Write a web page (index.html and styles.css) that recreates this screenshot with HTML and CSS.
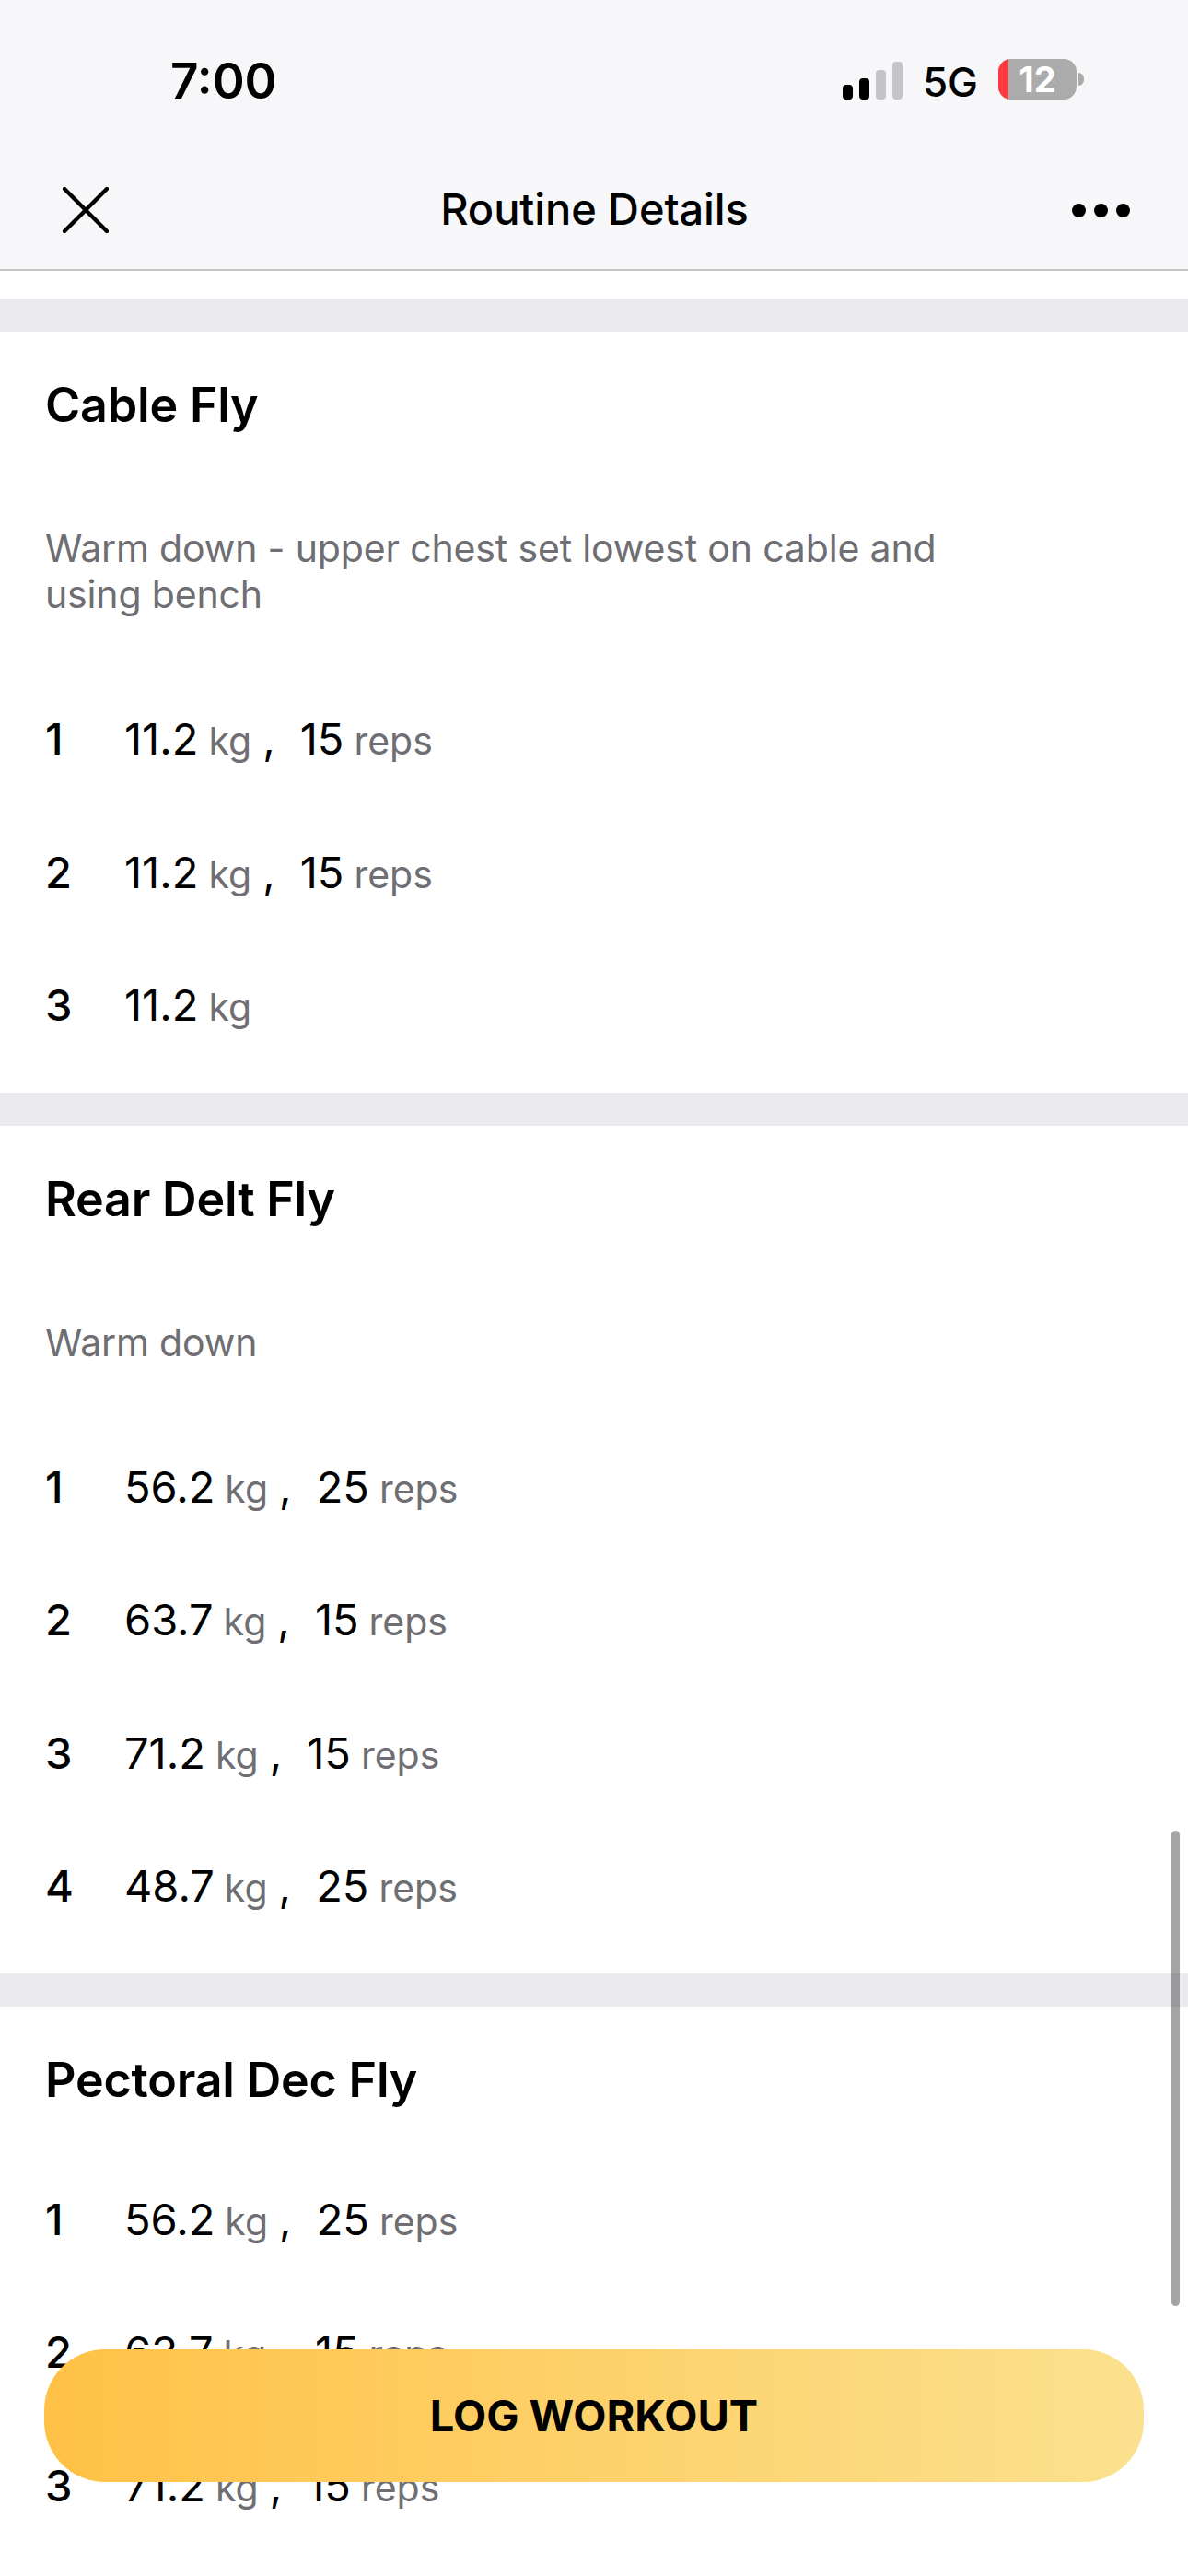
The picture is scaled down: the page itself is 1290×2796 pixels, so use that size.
FILE: index.html
```html
<!DOCTYPE html>
<html lang="en">
<head>
    <meta charset="UTF-8">
    <meta name="viewport" content="width=device-width, initial-scale=1.0">
    <title>Routine Details</title>
    <link rel="stylesheet" href="styles.css">
</head>
<body>
    <div class="screen">
        <header class="top">
            <div class="status">
                <span class="time">7:00</span>
                <div class="status-right">
                    <div class="signal">
                        <i class="bar on b1"></i>
                        <i class="bar on b2"></i>
                        <i class="bar b3"></i>
                        <i class="bar b4"></i>
                    </div>
                    <span class="net">5G</span>
                    <div class="battery">
                        <div class="battery-body"><i class="battery-low"></i><span class="battery-num">12</span></div>
                        <i class="battery-nub"></i>
                    </div>
                </div>
            </div>
            <nav class="nav">
                <svg class="close" width="50" height="50" viewBox="0 0 50 50" fill="none" stroke="#000" stroke-width="4.4" stroke-linecap="round">
                    <path d="M2 2 L48 48 M48 2 L2 48"/>
                </svg>
                <span class="nav-title">Routine Details</span>
                <div class="more"><i></i><i></i><i></i></div>
            </nav>
        </header>

        <section class="block first">
            <h2>Cable Fly</h2>
            <p class="note">Warm down - upper chest set lowest on cable and using bench</p>
            <div class="sets">
                <div class="set"><span class="num">1</span><span class="val">11.2</span><span class="unit">kg</span><span class="comma">,</span><span class="val">15</span><span class="unit">reps</span></div>
                <div class="set"><span class="num">2</span><span class="val">11.2</span><span class="unit">kg</span><span class="comma">,</span><span class="val">15</span><span class="unit">reps</span></div>
                <div class="set"><span class="num">3</span><span class="val">11.2</span><span class="unit">kg</span></div>
            </div>
        </section>

        <section class="block">
            <h2>Rear Delt Fly</h2>
            <p class="note">Warm down</p>
            <div class="sets">
                <div class="set"><span class="num">1</span><span class="val">56.2</span><span class="unit">kg</span><span class="comma">,</span><span class="val">25</span><span class="unit">reps</span></div>
                <div class="set"><span class="num">2</span><span class="val">63.7</span><span class="unit">kg</span><span class="comma">,</span><span class="val">15</span><span class="unit">reps</span></div>
                <div class="set"><span class="num">3</span><span class="val">71.2</span><span class="unit">kg</span><span class="comma">,</span><span class="val">15</span><span class="unit">reps</span></div>
                <div class="set"><span class="num">4</span><span class="val">48.7</span><span class="unit">kg</span><span class="comma">,</span><span class="val">25</span><span class="unit">reps</span></div>
            </div>
        </section>

        <section class="block">
            <h2>Pectoral Dec Fly</h2>
            <div class="sets">
                <div class="set"><span class="num">1</span><span class="val">56.2</span><span class="unit">kg</span><span class="comma">,</span><span class="val">25</span><span class="unit">reps</span></div>
                <div class="set"><span class="num">2</span><span class="val">63.7</span><span class="unit">kg</span><span class="comma">,</span><span class="val">15</span><span class="unit">reps</span></div>
                <div class="set"><span class="num">3</span><span class="val">71.2</span><span class="unit">kg</span><span class="comma">,</span><span class="val">15</span><span class="unit">reps</span></div>
            </div>
        </section>

        <div class="scrollbar"></div>
        <button class="log-btn">LOG WORKOUT</button>
    </div>
</body>
</html>
```

FILE: styles.css
```css
* {
    box-sizing: border-box;
}
body {
    margin: 0;
    background-color: #ffffff;
    font-family: 'Inter', 'Liberation Sans', sans-serif;
    color: #000000;
}
.screen {
    position: relative;
    width: 1290px;
    height: 2796px;
    overflow: hidden;
    background-color: #ffffff;
}
.top {
    height: 294px;
    background-color: #f7f7f9;
    border-bottom: 2px solid #c4c4c6;
}
.status {
    height: 176px;
    display: flex;
    align-items: flex-start;
    justify-content: space-between;
    padding: 56px 113px 0 185px;
}
.time {
    font-size: 53px;
    font-weight: 600;
    line-height: 64px;
}
.status-right {
    display: flex;
    align-items: center;
    margin-top: 8px;
}
.signal {
    display: flex;
    align-items: flex-end;
    gap: 7px;
    height: 41px;
    margin-top: 2px;
}
.bar {
    display: block;
    width: 11px;
    border-radius: 4px;
    background-color: #c5c5c7;
}
.bar.on {
    background-color: #000000;
}
.b1 { height: 16px; }
.b2 { height: 23px; }
.b3 { height: 32px; }
.b4 { height: 41px; }
.net {
    margin-left: 22px;
    padding-top: 6px;
    font-size: 44px;
    font-weight: 500;
    line-height: 38px;
}
.battery {
    display: flex;
    align-items: center;
    gap: 2px;
    margin-left: 22px;
}
.battery-body {
    position: relative;
    display: flex;
    align-items: center;
    justify-content: center;
    width: 85px;
    height: 44px;
    border-radius: 14px;
    overflow: hidden;
    background-color: #ababab;
}
.battery-low {
    position: absolute;
    left: 0;
    top: 0;
    bottom: 0;
    width: 11px;
    background-color: #ff3b3f;
}
.battery-num {
    font-size: 38px;
    font-weight: 700;
    line-height: 44px;
    color: #ffffff;
}
.battery-nub {
    display: block;
    width: 6px;
    height: 14px;
    border-radius: 0 6px 6px 0;
    background-color: #ababab;
}
.nav {
    height: 116px;
    display: flex;
    align-items: center;
    justify-content: space-between;
    padding: 0 63px 12px 68px;
}
.nav-title {
    margin-left: 9px;
    margin-bottom: 3px;
    font-size: 47px;
    font-weight: 500;
    letter-spacing: -0.1px;
}
.more {
    display: flex;
    gap: 9px;
}
.more i {
    display: block;
    width: 15px;
    height: 15px;
    border-radius: 50%;
    background-color: #000000;
}
.block {
    border-top: 36px solid #eaeaee;
    padding: 0 49px 21px;
}
.block.first {
    margin-top: 30px;
}
.block h2 {
    margin: 0;
    height: 160px;
    line-height: 160px;
    font-size: 52px;
    font-weight: 600;
    letter-spacing: -0.2px;
}
.note {
    width: 1000px;
    margin: 50px 0 61px;
    font-size: 41px;
    line-height: 50px;
    letter-spacing: -0.15px;
    color: #6e6e73;
}
.set {
    height: 144.5px;
    display: flex;
    align-items: baseline;
    padding-top: 43px;
    font-size: 47px;
    line-height: 56px;
}
.num {
    width: 86px;
    font-weight: 500;
}
.unit {
    margin-left: 11px;
    font-size: 41px;
    color: #6e6e73;
}
.comma {
    margin: 0 27px 0 12px;
}
.scrollbar {
    position: absolute;
    left: 1272px;
    top: 1987px;
    width: 9px;
    height: 516px;
    border-radius: 5px;
    background-color: rgba(80, 80, 85, 0.52);
}
.log-btn {
    position: absolute;
    left: 48px;
    top: 2550px;
    width: 1194px;
    height: 144px;
    padding-bottom: 3px;
    border: none;
    border-radius: 66px;
    background: linear-gradient(90deg, #ffc146, #fbe18f);
    font-family: inherit;
    font-size: 47px;
    font-weight: 700;
    color: #000000;
}
```
